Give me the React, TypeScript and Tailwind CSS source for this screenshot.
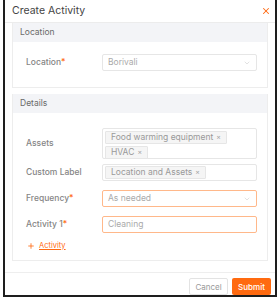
import { ChevronDown, Plus, X } from 'lucide-react'

function Chip({ label }: { label: string }) {
  return (
    <span className="inline-flex h-[13px] items-center gap-[3px] rounded-[1px] border border-[#e6e6e6] bg-[#f5f5f5] px-[5px] text-[8.5px] text-[#999]">
      {label}
      <span className="text-[7px] text-[#a5a5a5]">×</span>
    </span>
  )
}

function Label({ text, required }: { text: string; required?: boolean }) {
  return (
    <div className="w-[76px] shrink-0 text-[8.5px] font-medium text-[#858585]">
      {text}
      {required && <span className="text-[#ff6a13]">*</span>}
    </div>
  )
}

function SectionHead({ title }: { title: string }) {
  return (
    <div className="flex h-[19px] items-center bg-[#f3f4f7] pl-[7px] text-[8.5px] text-[#6a6a6a]">{title}</div>
  )
}

export default function App() {
  return (
    <div className="h-[300px] w-[279px] overflow-hidden bg-white pl-[3px]" style={{ fontFamily: 'Inter, "Open Sans", sans-serif' }}>
      <div className="flex h-[297px] w-[274px] flex-col border-x-2 border-b-2 border-[#1e1e1e] bg-white">
        <div className="flex h-[23px] shrink-0 items-center justify-between border-b border-[#ececec] pl-[7px] pr-[4px]">
          <span className="text-[10.5px] text-[#444]">Create Activity</span>
          <X className="h-[10px] w-[10px] text-[#ff6a13]" strokeWidth={2.5} />
        </div>

        <div className="ml-[7px] mr-[7px] flex flex-col gap-[6px]">
          <div className="h-[65px] border border-t-0 border-[#ededed]">
            <SectionHead title="Location" />
            <div className="flex items-center pl-[13px] pr-[10px] pt-[12px]">
              <Label text="Location" required />
              <div className="flex h-[17px] flex-1 items-center justify-between rounded-[2px] border border-[#e6e6e6] px-[5px] text-[8.5px] text-[#aaa]">
                Borivali
                <ChevronDown className="h-[8px] w-[8px] text-[#c4c4c4]" strokeWidth={1.5} />
              </div>
            </div>
          </div>

          <div className="h-[167px] border border-t-0 border-[#ededed]">
            <SectionHead title="Details" />
            <div className="flex flex-col pl-[13px] pr-[10px] pt-[15px]">
              <div className="flex items-center">
                <Label text="Assets" />
                <div className="flex h-[31px] flex-1 flex-col items-start gap-[2px] rounded-[2px] border border-[#e6e6e6] px-[2px] pt-[2px]">
                  <Chip label="Food warming equipment" />
                  <Chip label="HVAC" />
                </div>
              </div>
              <div className="mt-[5px] flex items-center">
                <Label text="Custom Label" />
                <div className="flex h-[17px] flex-1 items-center rounded-[2px] border border-[#e6e6e6] px-[2px]">
                  <Chip label="Location and Assets" />
                </div>
              </div>
              <div className="mt-[9px] flex items-center">
                <Label text="Frequency" required />
                <div className="flex h-[17px] flex-1 items-center justify-between rounded-[2px] border border-[#ffb88a] px-[5px] text-[8.5px] text-[#aaa]">
                  As needed
                  <ChevronDown className="h-[8px] w-[8px] text-[#c4c4c4]" strokeWidth={1.5} />
                </div>
              </div>
              <div className="mt-[9px] flex items-center">
                <Label text="Activity 1" required />
                <div className="flex h-[17px] flex-1 items-center rounded-[2px] border border-[#ffb88a] px-[5px] text-[8.5px] text-[#aaa]">
                  Cleaning
                </div>
              </div>
              <div className="mt-[7px] flex items-center gap-[4px] pl-[1px] text-[7.5px] text-[#ff6a13]">
                <Plus className="h-[8px] w-[8px]" strokeWidth={2.5} />
                <span className="underline">Activity</span>
              </div>
            </div>
          </div>
        </div>

        <div className="mt-[11px] border-t border-[#eeeeee]" />
        <div className="flex justify-end gap-[4px] pr-[4px] pt-[5px]">
          <button className="h-[17px] w-[39px] rounded-[2px] border border-[#e3e3e3] bg-white text-[8px] text-[#999]">Cancel</button>
          <button className="h-[17px] w-[39px] rounded-[2px] bg-[#ff6a10] text-[8px] font-medium text-white">Submit</button>
        </div>
      </div>
    </div>
  )
}
